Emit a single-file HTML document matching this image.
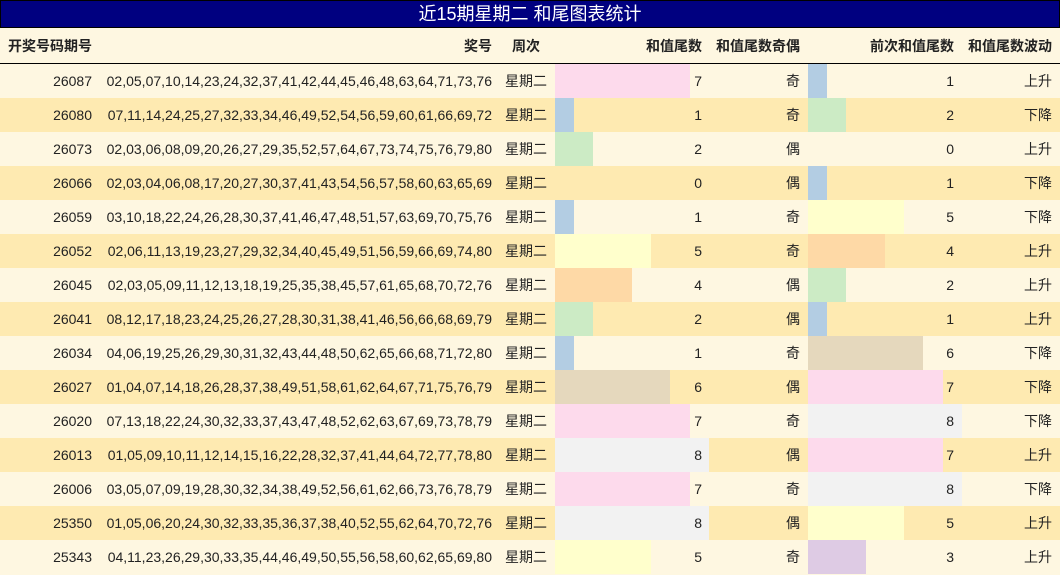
<!DOCTYPE html><html><head><meta charset="utf-8"><style>
body{margin:0;width:1060px;height:575px;background:#fef7e1;font-family:"Liberation Sans","Noto Sans CJK SC",sans-serif;font-size:14px;color:#222;overflow:hidden}
.t{position:absolute;left:0;top:0;width:1058px;height:26px;background:#000080;border:1px solid #000;color:#fff;font-size:18px;text-align:center;line-height:26px}
.h{position:absolute;left:0;top:28px;width:1060px;height:35px;border-bottom:1px solid #000;font-weight:bold}
.r{position:absolute;left:0;width:1060px;height:34px}
.a{background:#fef7e1}.b{background:#feeab1}
.h span,.r span{position:absolute;top:0;line-height:34px;white-space:nowrap}
.h span{line-height:36px}
.r i{position:absolute;top:0;height:34px}
.c0{left:0;width:92px;text-align:right}.c1{left:100px;width:392px;text-align:right}
.c2{left:497px;width:58px;text-align:center}.c3{left:555px;width:147px;text-align:right}
.c4{left:708px;width:92px;text-align:right}.c5{left:808px;width:146px;text-align:right}
.c6{left:962px;width:90px;text-align:right}
.p{left:555px}.q{left:808px}
.v1{background:#b3cde3;width:19px}.v2{background:#ccebc5;width:38px}.v3{background:#decbe4;width:58px}.v4{background:#fed9a6;width:77px}.v5{background:#ffffcc;width:96px}.v6{background:#e5d8bd;width:115px}.v7{background:#fddaec;width:135px}.v8{background:#f2f2f2;width:154px}
</style></head><body>
<div class="t">近15期星期二 和尾图表统计</div>
<div class="h"><span style="left:8px">开奖号码期号</span><span class="c1">奖号</span><span class="c2">周次</span><span class="c3">和值尾数</span><span style="left:716px">和值尾数奇偶</span><span class="c5">前次和值尾数</span><span class="c6">和值尾数波动</span></div>
<div class="r a" style="top:64px"><i class="p v7"></i><i class="q v1"></i><span class="c0">26087</span><span class="c1">02,05,07,10,14,23,24,32,37,41,42,44,45,46,48,63,64,71,73,76</span><span class="c2">星期二</span><span class="c3">7</span><span class="c4">奇</span><span class="c5">1</span><span class="c6">上升</span></div>
<div class="r b" style="top:98px"><i class="p v1"></i><i class="q v2"></i><span class="c0">26080</span><span class="c1">07,11,14,24,25,27,32,33,34,46,49,52,54,56,59,60,61,66,69,72</span><span class="c2">星期二</span><span class="c3">1</span><span class="c4">奇</span><span class="c5">2</span><span class="c6">下降</span></div>
<div class="r a" style="top:132px"><i class="p v2"></i><span class="c0">26073</span><span class="c1">02,03,06,08,09,20,26,27,29,35,52,57,64,67,73,74,75,76,79,80</span><span class="c2">星期二</span><span class="c3">2</span><span class="c4">偶</span><span class="c5">0</span><span class="c6">上升</span></div>
<div class="r b" style="top:166px"><i class="q v1"></i><span class="c0">26066</span><span class="c1">02,03,04,06,08,17,20,27,30,37,41,43,54,56,57,58,60,63,65,69</span><span class="c2">星期二</span><span class="c3">0</span><span class="c4">偶</span><span class="c5">1</span><span class="c6">下降</span></div>
<div class="r a" style="top:200px"><i class="p v1"></i><i class="q v5"></i><span class="c0">26059</span><span class="c1">03,10,18,22,24,26,28,30,37,41,46,47,48,51,57,63,69,70,75,76</span><span class="c2">星期二</span><span class="c3">1</span><span class="c4">奇</span><span class="c5">5</span><span class="c6">下降</span></div>
<div class="r b" style="top:234px"><i class="p v5"></i><i class="q v4"></i><span class="c0">26052</span><span class="c1">02,06,11,13,19,23,27,29,32,34,40,45,49,51,56,59,66,69,74,80</span><span class="c2">星期二</span><span class="c3">5</span><span class="c4">奇</span><span class="c5">4</span><span class="c6">上升</span></div>
<div class="r a" style="top:268px"><i class="p v4"></i><i class="q v2"></i><span class="c0">26045</span><span class="c1">02,03,05,09,11,12,13,18,19,25,35,38,45,57,61,65,68,70,72,76</span><span class="c2">星期二</span><span class="c3">4</span><span class="c4">偶</span><span class="c5">2</span><span class="c6">上升</span></div>
<div class="r b" style="top:302px"><i class="p v2"></i><i class="q v1"></i><span class="c0">26041</span><span class="c1">08,12,17,18,23,24,25,26,27,28,30,31,38,41,46,56,66,68,69,79</span><span class="c2">星期二</span><span class="c3">2</span><span class="c4">偶</span><span class="c5">1</span><span class="c6">上升</span></div>
<div class="r a" style="top:336px"><i class="p v1"></i><i class="q v6"></i><span class="c0">26034</span><span class="c1">04,06,19,25,26,29,30,31,32,43,44,48,50,62,65,66,68,71,72,80</span><span class="c2">星期二</span><span class="c3">1</span><span class="c4">奇</span><span class="c5">6</span><span class="c6">下降</span></div>
<div class="r b" style="top:370px"><i class="p v6"></i><i class="q v7"></i><span class="c0">26027</span><span class="c1">01,04,07,14,18,26,28,37,38,49,51,58,61,62,64,67,71,75,76,79</span><span class="c2">星期二</span><span class="c3">6</span><span class="c4">偶</span><span class="c5">7</span><span class="c6">下降</span></div>
<div class="r a" style="top:404px"><i class="p v7"></i><i class="q v8"></i><span class="c0">26020</span><span class="c1">07,13,18,22,24,30,32,33,37,43,47,48,52,62,63,67,69,73,78,79</span><span class="c2">星期二</span><span class="c3">7</span><span class="c4">奇</span><span class="c5">8</span><span class="c6">下降</span></div>
<div class="r b" style="top:438px"><i class="p v8"></i><i class="q v7"></i><span class="c0">26013</span><span class="c1">01,05,09,10,11,12,14,15,16,22,28,32,37,41,44,64,72,77,78,80</span><span class="c2">星期二</span><span class="c3">8</span><span class="c4">偶</span><span class="c5">7</span><span class="c6">上升</span></div>
<div class="r a" style="top:472px"><i class="p v7"></i><i class="q v8"></i><span class="c0">26006</span><span class="c1">03,05,07,09,19,28,30,32,34,38,49,52,56,61,62,66,73,76,78,79</span><span class="c2">星期二</span><span class="c3">7</span><span class="c4">奇</span><span class="c5">8</span><span class="c6">下降</span></div>
<div class="r b" style="top:506px"><i class="p v8"></i><i class="q v5"></i><span class="c0">25350</span><span class="c1">01,05,06,20,24,30,32,33,35,36,37,38,40,52,55,62,64,70,72,76</span><span class="c2">星期二</span><span class="c3">8</span><span class="c4">偶</span><span class="c5">5</span><span class="c6">上升</span></div>
<div class="r a" style="top:540px"><i class="p v5"></i><i class="q v3"></i><span class="c0">25343</span><span class="c1">04,11,23,26,29,30,33,35,44,46,49,50,55,56,58,60,62,65,69,80</span><span class="c2">星期二</span><span class="c3">5</span><span class="c4">奇</span><span class="c5">3</span><span class="c6">上升</span></div>
</body></html>
